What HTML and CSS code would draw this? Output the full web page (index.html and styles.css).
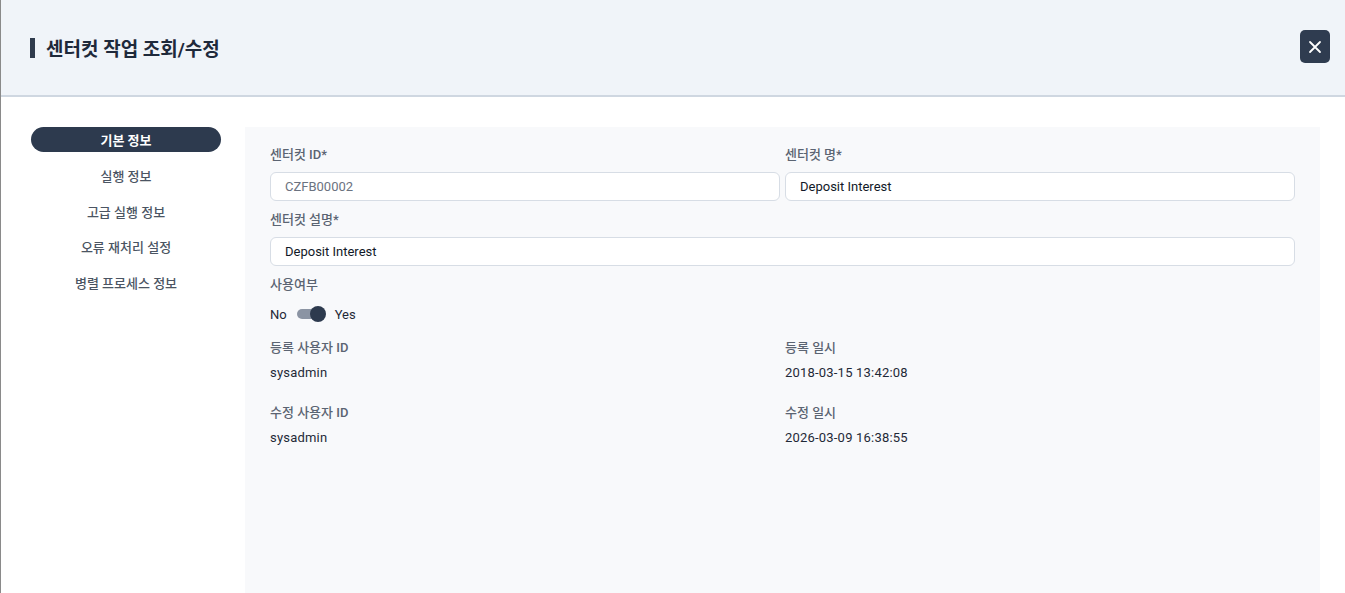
FILE: index.html
```html
<!DOCTYPE html>
<html lang="ko">
<head>
    <meta charset="UTF-8">
    <meta name="viewport" content="width=device-width, initial-scale=1.0">
    <title>센터컷 작업 조회/수정</title>
    <link rel="stylesheet" href="styles.css">
</head>
<body>
    <div class="modal">
        <header class="modal-header">
            <h1 class="modal-title">센터컷 작업 조회/수정</h1>
            <button class="close-button" aria-label="닫기">
                <svg width="14" height="14" viewBox="0 0 14 14">
                    <path d="M2 2L12 12M12 2L2 12" stroke="#fff" stroke-width="1.8" stroke-linecap="round"/>
                </svg>
            </button>
        </header>

        <div class="modal-body">
            <nav class="side-nav">
                <a class="nav-item active">기본 정보</a>
                <a class="nav-item">실행 정보</a>
                <a class="nav-item">고급 실행 정보</a>
                <a class="nav-item">오류 재처리 설정</a>
                <a class="nav-item">병렬 프로세스 정보</a>
            </nav>

            <section class="panel">
                <div class="form-row two">
                    <div class="field">
                        <label class="field-label">센터컷 ID*</label>
                        <input class="text-input readonly" value="CZFB00002" readonly>
                    </div>
                    <div class="field">
                        <label class="field-label">센터컷 명*</label>
                        <input class="text-input" value="Deposit Interest">
                    </div>
                </div>

                <div class="field">
                    <label class="field-label">센터컷 설명*</label>
                    <input class="text-input" value="Deposit Interest">
                </div>

                <div class="field">
                    <label class="field-label">사용여부</label>
                    <div class="toggle-row">
                        <span>No</span>
                        <span class="toggle"><span class="toggle-knob"></span></span>
                        <span>Yes</span>
                    </div>
                </div>

                <div class="info-grid">
                    <div class="info">
                        <div class="field-label">등록 사용자 ID</div>
                        <div class="info-value">sysadmin</div>
                    </div>
                    <div class="info">
                        <div class="field-label">등록 일시</div>
                        <div class="info-value">2018-03-15 13:42:08</div>
                    </div>
                    <div class="info">
                        <div class="field-label">수정 사용자 ID</div>
                        <div class="info-value">sysadmin</div>
                    </div>
                    <div class="info">
                        <div class="field-label">수정 일시</div>
                        <div class="info-value">2026-03-09 16:38:55</div>
                    </div>
                </div>
            </section>
        </div>
    </div>
</body>
</html>
```

FILE: styles.css
```css
body {
    margin: 0;
    padding: 0;
    height: 100vh;
    overflow: hidden;
    background-color: #fff;
    font-family: Roboto, "Noto Sans CJK KR", sans-serif;
    color: #1f2937;
}
.modal {
    height: 100vh;
    display: flex;
    flex-direction: column;
    border-left: 1px solid #8a8a8a;
    box-sizing: border-box;
}
.modal-header {
    height: 95px;
    flex-shrink: 0;
    display: flex;
    align-items: center;
    justify-content: space-between;
    padding: 0 15px 0 29px;
    background-color: #f0f4f9;
    border-bottom: 2px solid #cfd7e1;
}
.modal-title {
    margin: 0;
    display: flex;
    align-items: center;
    gap: 11px;
    font-size: 19px;
    font-weight: 700;
    color: #1e293b;
}
.modal-title::before {
    content: "";
    width: 5px;
    height: 20px;
    background-color: #2f3b4d;
}
.close-button {
    width: 30px;
    height: 33px;
    display: flex;
    align-items: center;
    justify-content: center;
    background-color: #2f3c50;
    border: none;
    border-radius: 5px;
    cursor: pointer;
    margin-bottom: 2px;
}
.modal-body {
    flex: 1;
    display: flex;
    padding: 30px 25px 0 30px;
    gap: 24px;
}
.side-nav {
    width: 190px;
    flex-shrink: 0;
    display: flex;
    flex-direction: column;
    gap: 10.75px;
}
.nav-item {
    height: 25px;
    display: flex;
    align-items: center;
    justify-content: center;
    font-size: 13px;
    font-weight: 500;
    color: #4b5563;
    border-radius: 13px;
    cursor: pointer;
}
.nav-item.active {
    background-color: #2d3a4e;
    color: #fff;
    font-weight: 700;
}
.panel {
    flex: 1;
    background-color: #f8f9fb;
    padding: 19px 25px 0 25px;
}
.form-row.two {
    display: grid;
    grid-template-columns: 1fr 1fr;
    gap: 5px;
}
.field {
    display: flex;
    flex-direction: column;
}
.field-label {
    font-size: 13px;
    font-weight: 500;
    color: #5b6472;
    line-height: 18px;
    margin-bottom: 8px;
}
.text-input {
    height: 29px;
    box-sizing: border-box;
    padding: 0 14px;
    border: 1px solid #d7dde5;
    border-radius: 6px;
    background-color: #fff;
    font-family: inherit;
    font-size: 13px;
    color: #111827;
    outline: none;
    margin-bottom: 10px;
}
.text-input.readonly {
    color: #6b7280;
}
.toggle-row {
    display: flex;
    align-items: center;
    gap: 10px;
    font-size: 13px;
    color: #1f2937;
    height: 22px;
    margin-top: 1px;
    margin-bottom: 14px;
}
.toggle {
    position: relative;
    width: 28px;
    height: 10px;
    border-radius: 5px;
    background-color: #8b94a3;
}
.toggle-knob {
    position: absolute;
    right: -1px;
    top: -3px;
    width: 16px;
    height: 16px;
    border-radius: 50%;
    background-color: #2d3a4e;
}
.info-grid {
    display: grid;
    grid-template-columns: 1fr 1fr;
    column-gap: 5px;
    row-gap: 22px;
}
.info .field-label {
    margin-bottom: 7px;
}
.info-value {
    font-size: 13px;
    color: #1f2937;
    line-height: 18px;
    letter-spacing: 0.2px;
}
```
